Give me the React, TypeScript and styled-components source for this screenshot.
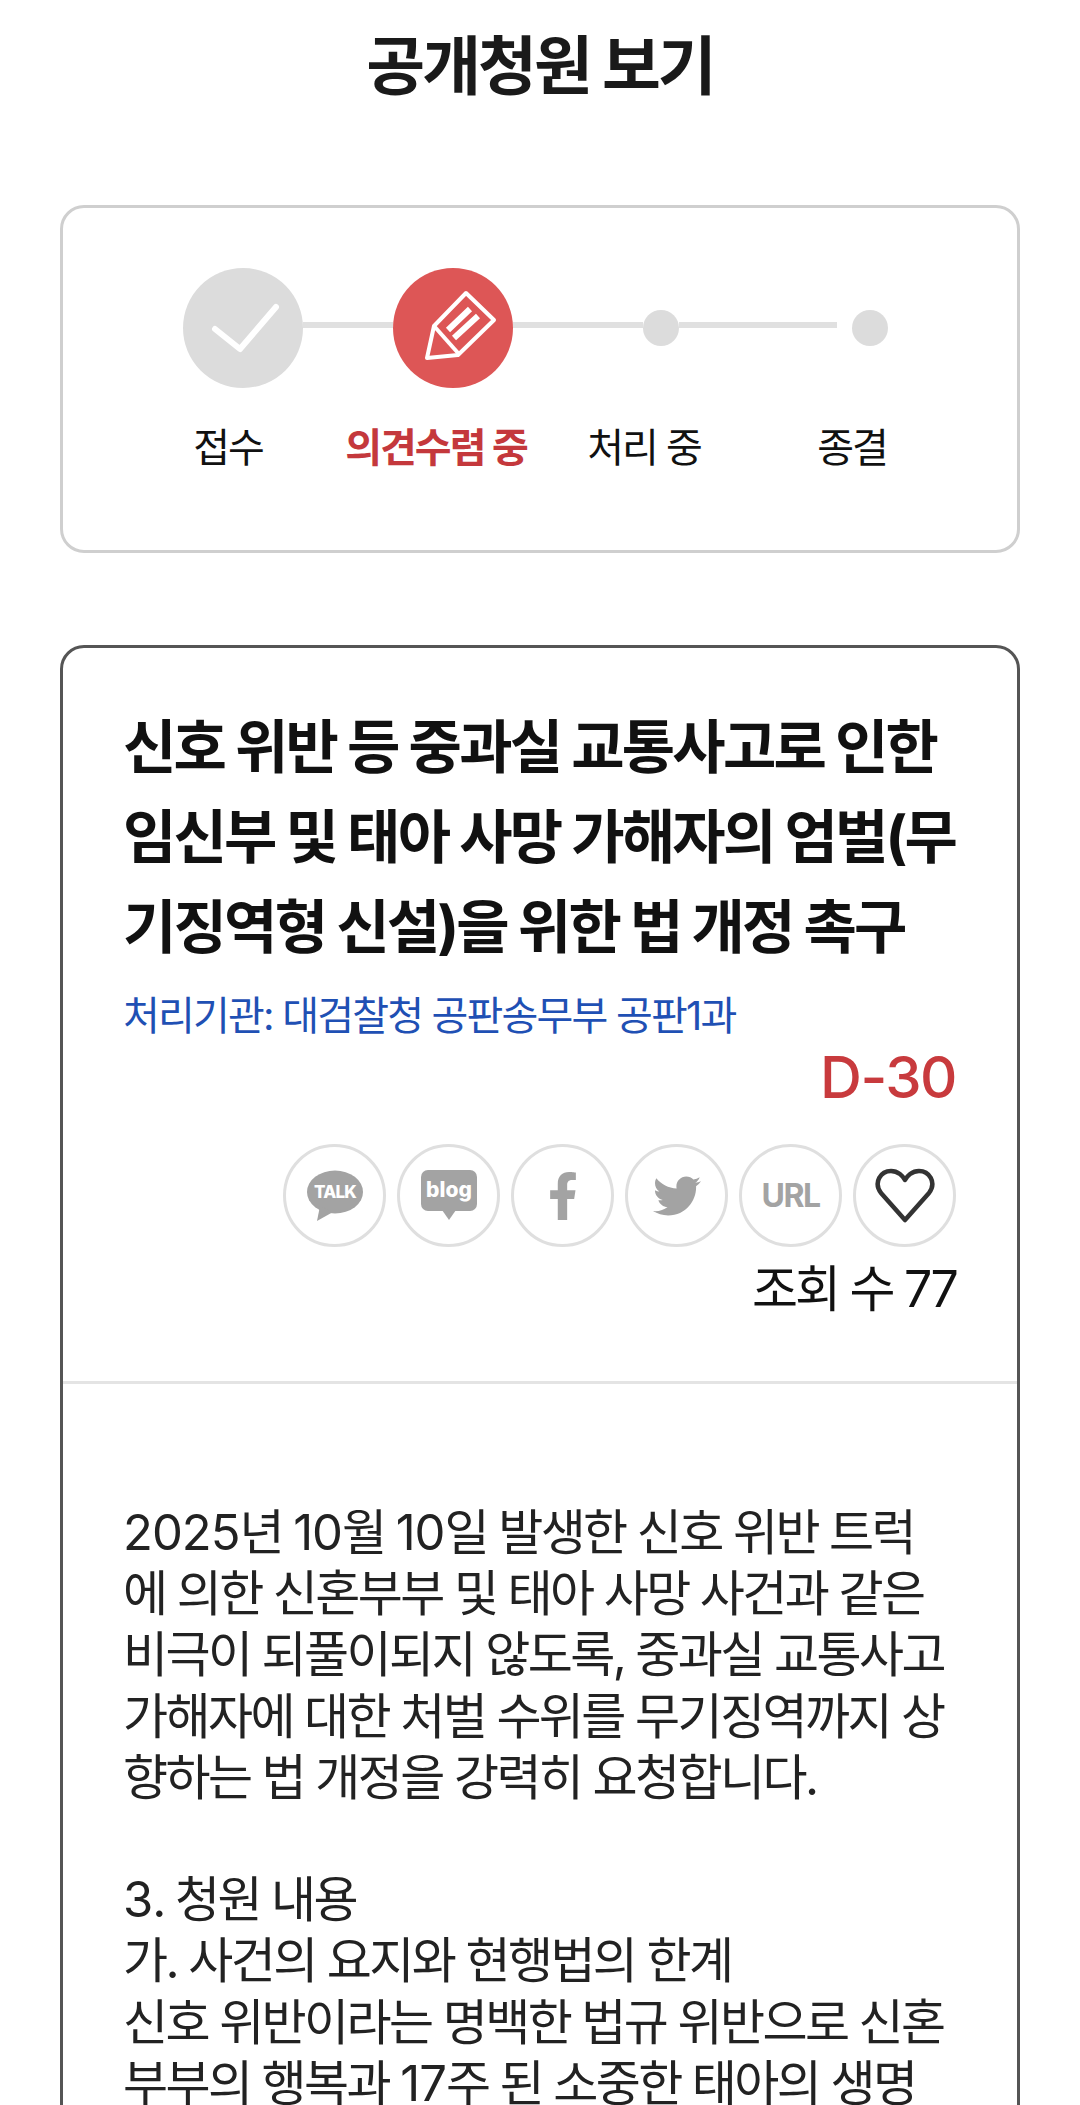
import styled, { createGlobalStyle } from "styled-components";
import { FaFacebookF, FaTwitter } from "react-icons/fa";

const GlobalStyle = createGlobalStyle`
  html, body {
    margin: 0;
    padding: 0;
    background: #fff;
    height: 2105px;
    overflow: hidden;
  }
  body {
    font-family: Inter, "Noto Sans CJK KR", "Noto Sans", sans-serif;
    color: #111;
  }
`;

const Page = styled.div`
  width: 1080px;
  height: 2105px;
  overflow: hidden;
  padding: 0 60px;
  box-sizing: border-box;
`;

const PageTitle = styled.h1`
  margin: 0;
  height: 205px;
  padding-top: 26px;
  box-sizing: border-box;
  text-align: center;
  font-size: 64px;
  line-height: 80px;
  font-weight: 700;
  letter-spacing: -3px;
  color: #1a1a1a;
`;

const StepCard = styled.section`
  height: 348px;
  box-sizing: border-box;
  border: 3px solid #cfcfcf;
  border-radius: 24px;
  padding: 60px 0 0 120px;
`;

const Track = styled.div`
  display: flex;
  align-items: center;
  height: 120px;
`;

const Node = styled.div<{ $active?: boolean }>`
  width: 120px;
  height: 120px;
  flex: none;
  border-radius: 50%;
  background: ${(p) => (p.$active ? "#dd5656" : "#dcdcdc")};
  display: flex;
  align-items: center;
  justify-content: center;
`;

const Dot = styled.div`
  width: 36px;
  height: 36px;
  flex: none;
  border-radius: 50%;
  background: #dcdcdc;
`;

const Line = styled.div<{ $w: number; $gap?: number }>`
  width: ${(p) => p.$w}px;
  height: 6px;
  margin: 0 ${(p) => p.$gap || 0}px 6px 0;
  flex: none;
  background: #e0e0e0;
`;

const Labels = styled.div`
  display: grid;
  grid-template-columns: repeat(4, 208px);
  margin: 30px 0 0 -59px;
`;

const Label = styled.div<{ $active?: boolean }>`
  text-align: center;
  font-size: 40px;
  line-height: 60px;
  letter-spacing: -2px;
  white-space: nowrap;
  font-weight: ${(p) => (p.$active ? 700 : 400)};
  color: ${(p) => (p.$active ? "#c4383c" : "#111")};
`;

const ContentCard = styled.section`
  margin-top: 92px;
  height: 1600px;
  box-sizing: border-box;
  border: 3px solid #555;
  border-radius: 24px;
`;

const Head = styled.header`
  height: 736px;
  box-sizing: border-box;
  padding: 54px 61px 0 60px;
  border-bottom: 3px solid #e4e4e4;
`;

const Title = styled.h2`
  margin: 0;
  font-size: 58px;
  line-height: 90px;
  font-weight: 700;
  letter-spacing: -2.8px;
  white-space: nowrap;
  color: #111;
`;

const Agency = styled.div`
  margin-top: 16px;
  font-size: 40px;
  line-height: 56px;
  letter-spacing: -1.8px;
  color: #1f50b4;
`;

const Deadline = styled.div`
  margin-top: -3px;
  text-align: right;
  font-size: 58px;
  line-height: 72px;
  font-weight: 500;
  letter-spacing: -1.5px;
  color: #c83a3d;
`;

const ShareRow = styled.div`
  display: flex;
  justify-content: flex-end;
  gap: 11px;
  margin-top: 31px;
`;

const ShareButton = styled.div<{ $dark?: boolean }>`
  width: 103px;
  height: 103px;
  box-sizing: border-box;
  border: 3px solid #dfdfdf;
  border-radius: 50%;
  display: flex;
  align-items: center;
  justify-content: center;
  color: ${(p) => (p.$dark ? "#333" : "#a3a3a3")};
`;

const UrlText = styled.span`
  font-size: 32px;
  font-weight: 700;
  letter-spacing: -1.5px;
  color: #a3a3a3;
`;

const Views = styled.div`
  text-align: right;
  margin-top: 10px;
  font-size: 50px;
  line-height: 64px;
  letter-spacing: -2.8px;
  color: #111;
`;

const Body = styled.div`
  padding: 118px 61px 0 60px;
  font-size: 49px;
  line-height: 61.2px;
  letter-spacing: -2.6px;
  white-space: pre;
  color: #222;
`;

const Num = styled.span`
  letter-spacing: -1px;
`;

const titleLines = [
  "신호 위반 등 중과실 교통사고로 인한",
  "임신부 및 태아 사망 가해자의 엄벌(무",
  "기징역형 신설)을 위한 법 개정 촉구",
];

const bodyText = `2025년 10월 10일 발생한 신호 위반 트럭
에 의한 신혼부부 및 태아 사망 사건과 같은
비극이 되풀이되지 않도록, 중과실 교통사고
가해자에 대한 처벌 수위를 무기징역까지 상
향하는 법 개정을 강력히 요청합니다.

3. 청원 내용
가. 사건의 요지와 현행법의 한계
신호 위반이라는 명백한 법규 위반으로 신혼
부부의 행복과 17주 된 소중한 태아의 생명`;

const CheckIcon = () => (
  <svg width="120" height="120" viewBox="0 0 120 120" fill="none">
    <path d="M32 61 L57 81 L93 39" stroke="#fff" strokeWidth="6" strokeLinecap="round" strokeLinejoin="round" />
  </svg>
);

const PencilIcon = () => (
  <svg width="120" height="120" viewBox="0 0 120 120" fill="none" stroke="#fff" strokeWidth="4">
    <path d="M34 90 L41 58 L73 25 L101 52 L65 87 Z" strokeLinejoin="round" />
    <path d="M41 58 L65 85" />
    <path d="M55 62 L77 41 M61 70 L85 48" strokeWidth="6" />
  </svg>
);

const TalkIcon = () => (
  <svg width="58" height="52" viewBox="0 0 58 52">
    <ellipse cx="29" cy="22" rx="28" ry="21.5" fill="#a3a3a3" />
    <path d="M14 36 L11 51 L27 42 Z" fill="#a3a3a3" />
    <text x="29" y="28" textAnchor="middle" fontSize="17" fontWeight="800" fill="#fff" letterSpacing="-0.8">TALK</text>
  </svg>
);

const BlogIcon = () => (
  <svg width="58" height="52" viewBox="0 0 58 52">
    <rect x="1" y="0" width="56" height="41" rx="7" fill="#a3a3a3" />
    <path d="M22 40 L29 50 L36 40 Z" fill="#a3a3a3" />
    <text x="29" y="27" textAnchor="middle" fontSize="21" fontWeight="800" fill="#fff">blog</text>
  </svg>
);

const HeartIcon = () => (
  <svg width="60" height="56" viewBox="0 0 60 56" fill="none">
    <path d="M30 52 L6 25 C-2 14 6 3 16 3 C23 3 28 8 30 12 C32 8 37 3 44 3 C54 3 62 14 54 25 Z" stroke="#333" strokeWidth="4.5" strokeLinejoin="round" />
  </svg>
);

function App() {
  return (
    <Page>
      <GlobalStyle />
      <PageTitle>공개청원 보기</PageTitle>
      <StepCard>
        <Track>
          <Node>
            <CheckIcon />
          </Node>
          <Line $w={90} />
          <Node $active>
            <PencilIcon />
          </Node>
          <Line $w={130} />
          <Dot />
          <Line $w={158} $gap={15} />
          <Dot />
        </Track>
        <Labels>
          <Label>접수</Label>
          <Label $active>의견수렴 중</Label>
          <Label>처리 중</Label>
          <Label>종결</Label>
        </Labels>
      </StepCard>
      <ContentCard>
        <Head>
          <Title>
            {titleLines.map((line) => (
              <div key={line}>{line}</div>
            ))}
          </Title>
          <Agency>처리기관: 대검찰청 공판송무부 공판1과</Agency>
          <Deadline>D-30</Deadline>
          <ShareRow>
            <ShareButton>
              <TalkIcon />
            </ShareButton>
            <ShareButton>
              <BlogIcon />
            </ShareButton>
            <ShareButton>
              <FaFacebookF size={48} />
            </ShareButton>
            <ShareButton>
              <FaTwitter size={48} />
            </ShareButton>
            <ShareButton>
              <UrlText>URL</UrlText>
            </ShareButton>
            <ShareButton $dark>
              <HeartIcon />
            </ShareButton>
          </ShareRow>
          <Views>조회 수 77</Views>
        </Head>
        <Body>
          {bodyText.split(/(\d+)/).map((part, i) =>
            i % 2 === 1 ? <Num key={i}>{part}</Num> : part
          )}
        </Body>
      </ContentCard>
    </Page>
  );
}

export default App;
